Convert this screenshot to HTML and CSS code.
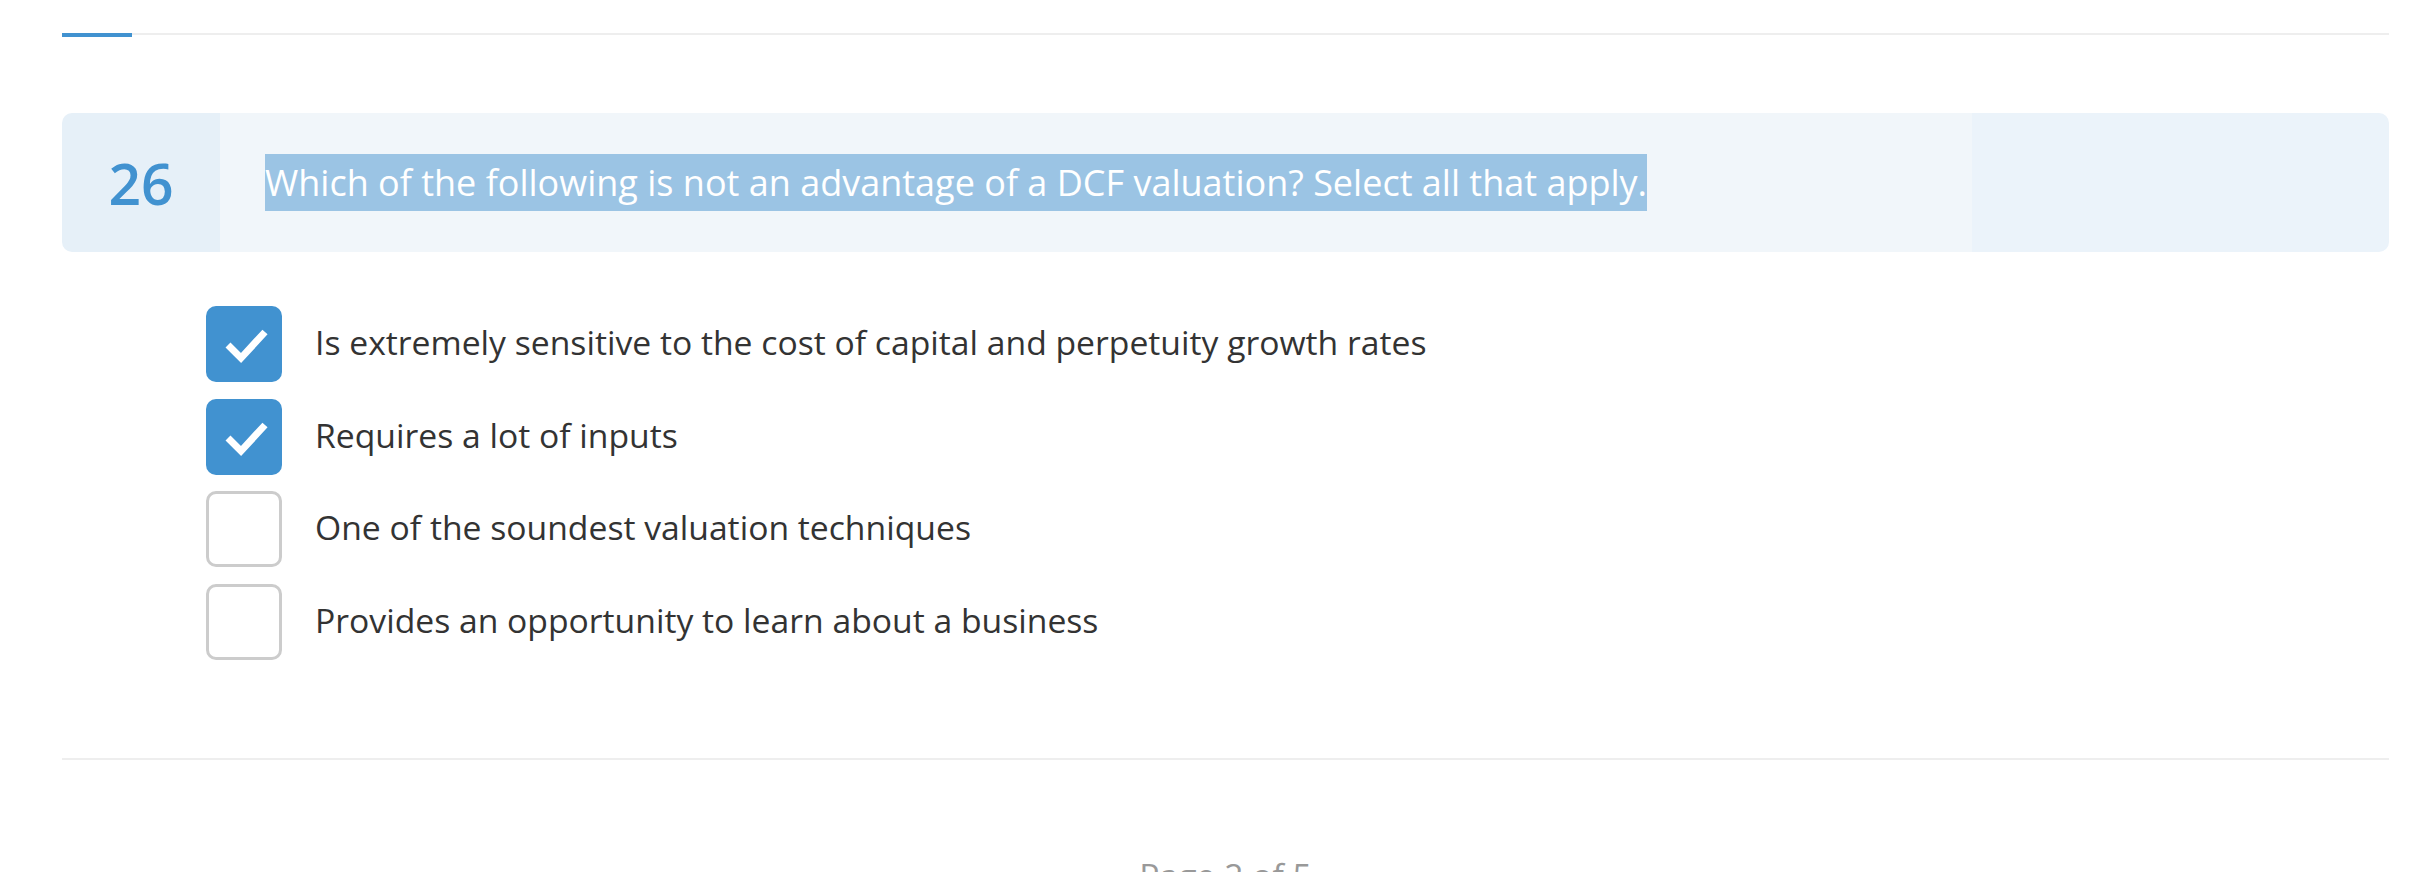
FILE: index.html
```html
<!DOCTYPE html>
<html lang="en">
<head>
<meta charset="utf-8">
<title>Quiz question 26</title>
<link rel="stylesheet" href="styles.css">
</head>
<body>
<div class="page">
  <div class="progress">
    <div class="progress-fill"></div>
    <div class="progress-track"></div>
  </div>

  <div class="card">
    <div class="card-num">26</div>
    <div class="card-question"><span class="selected">Which of the following is not an advantage of a DCF valuation? Select all that apply.</span></div>
    <div class="card-aside"></div>
  </div>

  <ul class="options">
    <li class="option">
      <span class="box checked"><svg viewBox="0 0 76 76" width="76" height="76"><polyline points="22,39 35,52 59,26" fill="none" stroke="#fff" stroke-width="7"/></svg></span>
      <span class="label">Is extremely sensitive to the cost of capital and perpetuity growth rates</span>
    </li>
    <li class="option">
      <span class="box checked"><svg viewBox="0 0 76 76" width="76" height="76"><polyline points="22,39 35,52 59,26" fill="none" stroke="#fff" stroke-width="7"/></svg></span>
      <span class="label">Requires a lot of inputs</span>
    </li>
    <li class="option">
      <span class="box"></span>
      <span class="label">One of the soundest valuation techniques</span>
    </li>
    <li class="option">
      <span class="box"></span>
      <span class="label">Provides an opportunity to learn about a business</span>
    </li>
  </ul>

  <div class="separator"></div>

  <div class="pager">Page 2 of 5</div>
</div>
</body>
</html>
```
FILE: styles.css
```css
html, body {
  margin: 0;
  padding: 0;
  background: #fff;
}

body {
  font-family: "Open Sans", "Noto Sans", "Liberation Sans", sans-serif;
  color: #333;
}

.page {
  padding: 33px 31px 0 62px;
}

.progress {
  display: flex;
  align-items: flex-start;
  height: 4px;
}

.progress-fill {
  width: 70px;
  height: 4px;
  background: #4192d0;
}

.progress-track {
  flex: 1;
  height: 2px;
  background: #eeeeee;
}

.card {
  margin-top: 76px;
  display: flex;
  height: 139px;
  border-radius: 10px;
  overflow: hidden;
}

.card-num {
  width: 158px;
  flex: none;
  background: #e6f0f8;
  color: #4192d0;
  font-size: 57px;
  font-weight: 600;
  display: flex;
  align-items: center;
  justify-content: center;
}

.card-question {
  flex: 1;
  background: #f1f6fa;
  display: flex;
  align-items: center;
  padding-left: 45px;
  font-size: 36px;
  font-weight: 400;
}

.selected {
  background: #9bc4e4;
  color: #fff;
  padding: 4px 0;
}

.card-aside {
  width: 417px;
  flex: none;
  background: #ebf3fa;
}

.options {
  list-style: none;
  margin: 54px 0 0;
  padding: 0 0 0 144px;
  display: flex;
  flex-direction: column;
  gap: 16.5px;
}

.option {
  display: flex;
  align-items: center;
  gap: 33px;
}

.box {
  width: 76px;
  height: 76px;
  box-sizing: border-box;
  border: 3px solid #cccccc;
  border-radius: 10px;
  background: #fff;
  flex: none;
  display: block;
}

.box.checked {
  border: none;
  background: #4192d0;
}

.box svg {
  display: block;
}

.label {
  font-size: 33.7px;
  color: #333;
  position: relative;
  top: -2px;
}

.separator {
  margin-top: 98px;
  height: 2px;
  background: #eeeeee;
}

.pager {
  margin-top: 92px;
  text-align: center;
  font-size: 33.7px;
  color: #999;
}
```
